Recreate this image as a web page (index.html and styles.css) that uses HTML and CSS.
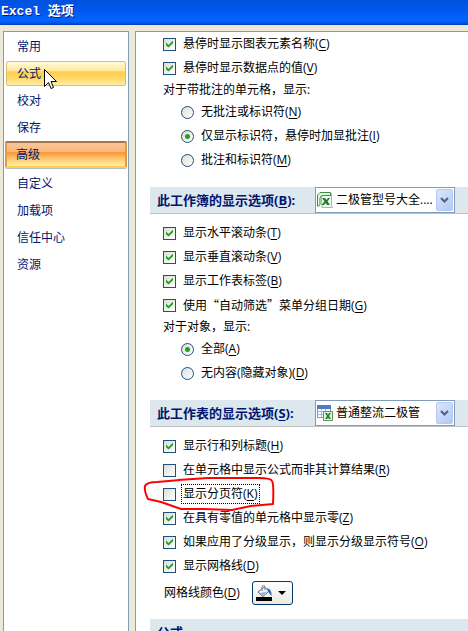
FILE: index.html
```html
<!DOCTYPE html>
<html lang="zh-CN">
<head>
  <meta charset="UTF-8" />
  <meta name="viewport" content="width=device-width, initial-scale=1.0"/>
  <title>Excel 选项</title>
  <link rel="stylesheet" href="styles.css">
</head>
<body>
  <header class="titlebar">
    <h1>Excel 选项</h1>
  </header>

  <div class="dialog">
    <nav class="sidebar">
      <button type="button">常用</button>
      <button type="button" class="hover">公式
        <svg class="cursor" width="13" height="21" viewBox="0 0 13 21">
          <path d="M.5.5V17.500L4.500 13.500L7 19.500L9.500 18.500L7 12.500H12.500Z" fill="#fff" stroke="#000"/>
        </svg>
      </button>
      <button type="button">校对</button>
      <button type="button">保存</button>
      <button type="button" class="active">高级</button>
      <button type="button">自定义</button>
      <button type="button">加载项</button>
      <button type="button">信任中心</button>
      <button type="button">资源</button>
    </nav>

    <main class="panel">
      <section>
        <label class="row"><input type="checkbox" checked><span>悬停时显示图表元素名称(<u>C</u>)</span></label>
        <label class="row"><input type="checkbox" checked><span>悬停时显示数据点的值(<u>V</u>)</span></label>
        <p>对于带批注的单元格，显示:</p>
        <label class="row sub"><input type="radio" name="comments"><span>无批注或标识符(<u>N</u>)</span></label>
        <label class="row sub"><input type="radio" name="comments" checked><span>仅显示标识符，悬停时加显批注(<u>I</u>)</span></label>
        <label class="row sub"><input type="radio" name="comments"><span>批注和标识符(<u>M</u>)</span></label>
      </section>

      <div class="band">
        <label for="workbook">此工作簿的显示选项(<u>B</u>):</label>
        <div class="combo">
          <svg width="16" height="16" viewBox="0 0 16 16">
            <path d="M4 2.500L14.500 1.500V13.500L15.500 15.500H5Z" fill="#f4f8f2" stroke="#a9b7a5"/>
            <path d="M.5 14V3L3 .5H13.500V4M13.500 3.500H6Q3 3.500 3 6.500V13L.5 14.500" fill="#e4f1df" stroke="#3c9142"/>
            <path d="M5 6H8L9.500 8L11 6H13L10.500 9.500L13 13H10L8.500 11L7 13H4.500L7.500 9.500Z" fill="#207a2d"/>
          </svg>
          <select id="workbook"><option>二极管型号大全....</option></select>
          <span class="arrow"><svg width="9" height="6" viewBox="0 0 9 6"><path d="M1 1L4.500 4.500L8 1" fill="none" stroke="#4d6185" stroke-width="2"/></svg></span>
        </div>
      </div>
      <section class="group">
        <label class="row"><input type="checkbox" checked><span>显示水平滚动条(<u>T</u>)</span></label>
        <label class="row"><input type="checkbox" checked><span>显示垂直滚动条(<u>V</u>)</span></label>
        <label class="row"><input type="checkbox" checked><span>显示工作表标签(<u>B</u>)</span></label>
        <label class="row"><input type="checkbox" checked><span>使用<span class="quoted">“自动筛选”</span>菜单分组日期(<u>G</u>)</span></label>
        <p>对于对象，显示:</p>
        <label class="row sub"><input type="radio" name="objects" checked><span>全部(<u>A</u>)</span></label>
        <label class="row sub"><input type="radio" name="objects"><span>无内容(隐藏对象)(<u>D</u>)</span></label>
      </section>

      <div class="band">
        <label for="sheet">此工作表的显示选项(<u>S</u>):</label>
        <div class="combo">
          <svg width="16" height="16" viewBox="0 0 16 16">
            <rect x=".5" y=".5" width="13" height="12" fill="#fff" stroke="#7f9dc6"/>
            <path d="M0 0H14V4H0Z" fill="#4c7cc4"/>
            <path d="M1 6.500H13M1 9.500H13M4.500 4V12M8.500 4V12" stroke="#a6bddc"/>
            <rect x="6.500" y="6.500" width="9" height="9" fill="#e5f1e1" stroke="#5b9d5c"/>
            <path d="M8 8H10L11 10L12 8H14L12 11L14 14H12L11 12.500L10 14H8L10 11Z" fill="#207a2d"/>
          </svg>
          <select id="sheet"><option>普通整流二极管</option></select>
          <span class="arrow"><svg width="9" height="6" viewBox="0 0 9 6"><path d="M1 1L4.500 4.500L8 1" fill="none" stroke="#4d6185" stroke-width="2"/></svg></span>
        </div>
      </div>
      <section class="group">
        <label class="row"><input type="checkbox" checked><span>显示行和列标题(<u>H</u>)</span></label>
        <label class="row"><input type="checkbox"><span>在单元格中显示公式而非其计算结果(<u>R</u>)</span></label>
        <label class="row marked"><input type="checkbox"><span class="focus">显示分页符(<u>K</u>)</span>
          <svg class="circle" width="134" height="38" viewBox="0 0 134 38">
            <path d="M35 5L65 3H115Q128 3 129 6Q131 9 130 29L108 31L89 35L60 34H38L18 27L5 24Q1 16 2 11Q4 7 14 7L37 5" fill="none" stroke="#f00" stroke-width="2" stroke-linejoin="round"/>
          </svg>
        </label>
        <label class="row"><input type="checkbox" checked><span>在具有零值的单元格中显示零(<u>Z</u>)</span></label>
        <label class="row"><input type="checkbox" checked><span>如果应用了分级显示，则显示分级显示符号(<u>O</u>)</span></label>
        <label class="row"><input type="checkbox" checked><span>显示网格线(<u>D</u>)</span></label>
        <div class="color-row">
          <label for="grid-color">网格线颜色(<u>D</u>)</label>
          <button type="button" id="grid-color" aria-label="网格线颜色">
            <svg width="16" height="16" viewBox="0 0 16 16">
              <path d="M2 7L8 2L13 6L7 11.500Z" fill="#eef3fb" stroke="#53678e"/>
              <path d="M4 8L11 6.500L7 10.500Z" fill="#9db5dd"/>
              <path d="M6 6V2Q6 .5 7.500.5T9 2V5" fill="none" stroke="#7c8596"/>
              <path d="M11 3Q16 4 15.500 11L13 8Z" fill="#3566b8"/>
              <path d="M0 12H16V16H0Z"/>
            </svg>
            <svg width="8" height="4" viewBox="0 0 8 4"><path d="M0 0H8L4 4Z"/></svg>
          </button>
        </div>
      </section>

      <div class="band"><h2>公式</h2></div>
    </main>
  </div>
</body>
</html>
```

FILE: styles.css
```css
* {
  box-sizing: border-box;
}

body {
  margin: 0;
  height: 100vh;
  display: flex;
  flex-direction: column;
  overflow: hidden;
  background: #ece9d8;
  color: #000;
  font-family: "Open Sans", "Noto Sans CJK SC", sans-serif;
  font-size: 12px;
  line-height: 20px;
}

button, select {
  font: inherit;
  color: inherit;
}

u {
  text-underline-offset: 2px;
}

.titlebar {
  flex: none;
  height: 25px;
  background: linear-gradient(#0050dc, #0058ee 40%, #0066ff 84%, #0040c0);
}

.titlebar h1 {
  margin: 0;
  padding-left: 1px;
  font-family: "Liberation Mono", "Noto Sans CJK SC", monospace;
  font-size: 13px;
  line-height: 24px;
  color: #fff;
  text-shadow: 1px 1px #0a1883;
}

.dialog {
  flex: 1;
  min-height: 0;
  display: flex;
  gap: 6px;
  padding: 6px 0 0 3px;
}

/* category list */
.sidebar {
  flex: none;
  width: 126px;
  padding: 1px 1px 0;
  display: flex;
  flex-direction: column;
  background: #fff;
  border: 1px solid #7f9db9;
  border-bottom: none;
}

.sidebar button {
  position: relative;
  height: 27px;
  flex: none;
  padding: 0 0 0 11px;
  text-align: left;
  color: #00156e;
  background: none;
  border: 1px solid transparent;
}

.sidebar .hover {
  height: 25px;
  margin: 1px;
  padding-left: 10px;
  border-color: #dcbd6b;
  border-radius: 2px;
  background: linear-gradient(#fffbd9, #ffe99f 38%, #ffcf4a 42%, #ffd65f 65%, #ffeca5);
}

.sidebar .active {
  margin-bottom: 2px;
  padding-left: 9px;
  border: 2px solid #ffd044;
  border-top-color: #a5744a;
  border-left-color: #e09a45;
  border-right-color: #e09a45;
  border-radius: 2px;
  background: linear-gradient(#f8c79c, #fbb676 38%, #fb9438 42%, #fdc36a 65%, #fff0a6);
  box-shadow: 0 1px #b8bcc4;
}

.cursor {
  position: absolute;
  left: 37px;
  top: 7px;
}

/* options */
.panel {
  flex: 1;
  min-width: 0;
  padding-left: 14px;
  background: #fff;
  border: 1px solid #7f9db9;
  border-right: none;
  border-bottom: none;
  white-space: nowrap;
}

section {
  padding: 0 0 15px 13px;
}

.group {
  padding-top: 7px;
}

p {
  margin: 0;
}

.row {
  display: flex;
  align-items: center;
  gap: 7px;
  height: 24px;
}

.sub {
  padding-left: 18px;
}

.quoted {
  font-family: "Noto Sans CJK SC", sans-serif;
}

input {
  appearance: none;
  flex: none;
  display: grid;
  place-items: center;
  width: 13px;
  height: 13px;
  margin: 0;
  border: 1px solid #1c5180;
  background: linear-gradient(135deg, #dcdcd7, #fff);
}

input[type="radio"] {
  border-radius: 50%;
}

input[type="checkbox"]:checked::before {
  content: "";
  width: 7px;
  height: 7px;
  background: #21a121;
  clip-path: polygon(0 28%, 36% 64%, 100% 0, 100% 40%, 36% 100%, 0 68%);
}

input[type="radio"]:checked::before {
  content: "";
  width: 5px;
  height: 5px;
  border-radius: 50%;
  background: #21a121;
}

.marked {
  position: relative;
}

.focus {
  margin-left: -2px;
  padding: 0 3px 0 2px;
  outline: 1px dotted #000;
  outline-offset: -1px;
}

.circle {
  position: absolute;
  left: -20px;
  top: -7px;
}

.band {
  display: flex;
  align-items: center;
  height: 27px;
  padding-left: 7px;
  background: #dde7ee;
  border-bottom: 1px solid #c0c1c6;
  font-size: 13px;
  font-weight: bold;
  color: #00156e;
}

.band > label {
  width: 158px;
}

.band h2 {
  margin: 0;
  font-size: 13px;
}

.combo {
  position: relative;
  display: flex;
  align-items: center;
  width: 140px;
  height: 26px;
  padding-left: 1px;
  background: #fff;
  border: 1px solid #7f9db9;
  color: #000;
  font-size: 12px;
  font-weight: normal;
}

.combo select {
  appearance: none;
  flex: 1;
  min-width: 0;
  height: 24px;
  padding: 0 18px 0 3px;
  border: none;
  background: none;
}

.arrow {
  position: absolute;
  right: 1px;
  top: 1px;
  bottom: 1px;
  width: 17px;
  display: grid;
  place-items: center;
  border: 1px solid #b6c9f0;
  border-radius: 2px;
  background: linear-gradient(135deg, #dce6fd, #b4c8f6);
  pointer-events: none;
}

.color-row {
  display: flex;
  align-items: center;
  gap: 12px;
  height: 30px;
  padding-left: 1px;
  margin-bottom: -4px;
}

.color-row button {
  display: flex;
  align-items: center;
  gap: 6px;
  width: 41px;
  height: 24px;
  padding: 0 0 0 3px;
  border: 1px solid #003c74;
  border-radius: 3px;
  background: linear-gradient(#fff, #ece9e0);
}
```
